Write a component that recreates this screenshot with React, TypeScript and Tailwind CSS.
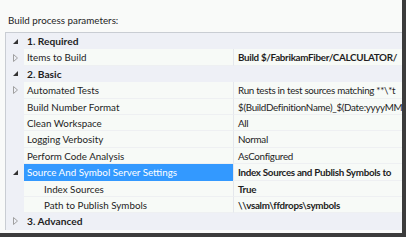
import React from "react";

type Row = {
  kind: "cat" | "item";
  label: string;
  value?: string;
  bold?: boolean;
  level?: number;
  expander?: "open" | "closed" | null;
  selected?: boolean;
};

// values are only as long as the visible part of the grid shows them
const ROWS: Row[] = [
  { kind: "cat", label: "1. Required", expander: "open" },
  { kind: "item", label: "Items to Build", value: "Build $/FabrikamFiber/CALCULATOR/", bold: true, expander: "closed" },
  { kind: "cat", label: "2. Basic", expander: "open" },
  { kind: "item", label: "Automated Tests", value: "Run tests in test sources matching **\\*t", expander: "closed" },
  { kind: "item", label: "Build Number Format", value: "$(BuildDefinitionName)_$(Date:yyyyMM" },
  { kind: "item", label: "Clean Workspace", value: "All" },
  { kind: "item", label: "Logging Verbosity", value: "Normal" },
  { kind: "item", label: "Perform Code Analysis", value: "AsConfigured" },
  { kind: "item", label: "Source And Symbol Server Settings", value: "Index Sources and Publish Symbols to", bold: true, expander: "open", selected: true },
  { kind: "item", label: "Index Sources", value: "True", bold: true, level: 2 },
  { kind: "item", label: "Path to Publish Symbols", value: "\\\\vsalm\\ffdrops\\symbols", bold: true, level: 2 },
  { kind: "cat", label: "3. Advanced", expander: "closed" },
];

function Expander({ state }: { state: "open" | "closed" }) {
  if (state === "open") {
    return (
      <svg width="7" height="7" viewBox="0 0 7 7">
        <path d="M6 1 L6 6 L1 6 Z" fill="#333" />
      </svg>
    );
  }
  return (
    <svg width="7" height="8" viewBox="0 0 7 8">
      <path d="M1.5 0.5 L5.5 4 L1.5 7.5 Z" fill="none" stroke="#a0a0a0" strokeWidth="1" />
    </svg>
  );
}

export default function App() {
  return (
    <div className="w-[408px] h-[240px] bg-white overflow-hidden" style={{ fontFamily: "Lato, 'Open Sans', sans-serif" }}>
      <div className="w-[406px] h-[237px] bg-[#f9faf9] border-r-[4px] border-b-[4px] border-[#3c3c3c] flex flex-col overflow-hidden">
        <div className="pl-[8px] pt-[13px] h-[32px] text-[9.8px] leading-[14px] text-[#1e1e1e]">
          Build process parameters:
        </div>
        <div className="ml-[5px] border-l border-t border-[#c9cdd3] flex flex-col">
          {ROWS.map((r) => {
            const isCat = r.kind === "cat";
            return (
              <div
                key={r.label}
                className={`flex h-[16.4px] items-stretch text-[9.8px] leading-[16px] ${
                  isCat ? "bg-[#eef0f6]" : ""
                }`}
              >
                <div className="w-[18px] shrink-0 bg-[#eef0f6] flex items-center justify-center">
                  {r.expander && <Expander state={r.expander} />}
                </div>
                {isCat ? (
                  <div className="flex-1 pl-[3px] font-bold text-[10.2px] text-[#1e1e1e] whitespace-nowrap">
                    {r.label}
                  </div>
                ) : (
                  <>
                    <div
                      className={`w-[209px] shrink-0 whitespace-nowrap overflow-hidden border-b ${
                        r.selected
                          ? "bg-[#3399ff] text-white border-[#3399ff]"
                          : "bg-[#f7faf7] text-[#1e1e1e] border-[#eef0f2]"
                      } ${r.level === 2 ? "pl-[20px]" : "pl-[3px]"}`}
                    >
                      {r.label}
                    </div>
                    <div
                      className={`flex-1 pl-[4px] whitespace-nowrap overflow-hidden tracking-[-0.3px] border-l border-b border-l-[#e4e7ec] border-b-[#eef0f2] bg-[#f7faf7] text-[#1e1e1e] ${
                        r.bold ? "font-bold" : ""
                      }`}
                    >
                      {r.value}
                    </div>
                  </>
                )}
              </div>
            );
          })}
        </div>
      </div>
    </div>
  );
}
